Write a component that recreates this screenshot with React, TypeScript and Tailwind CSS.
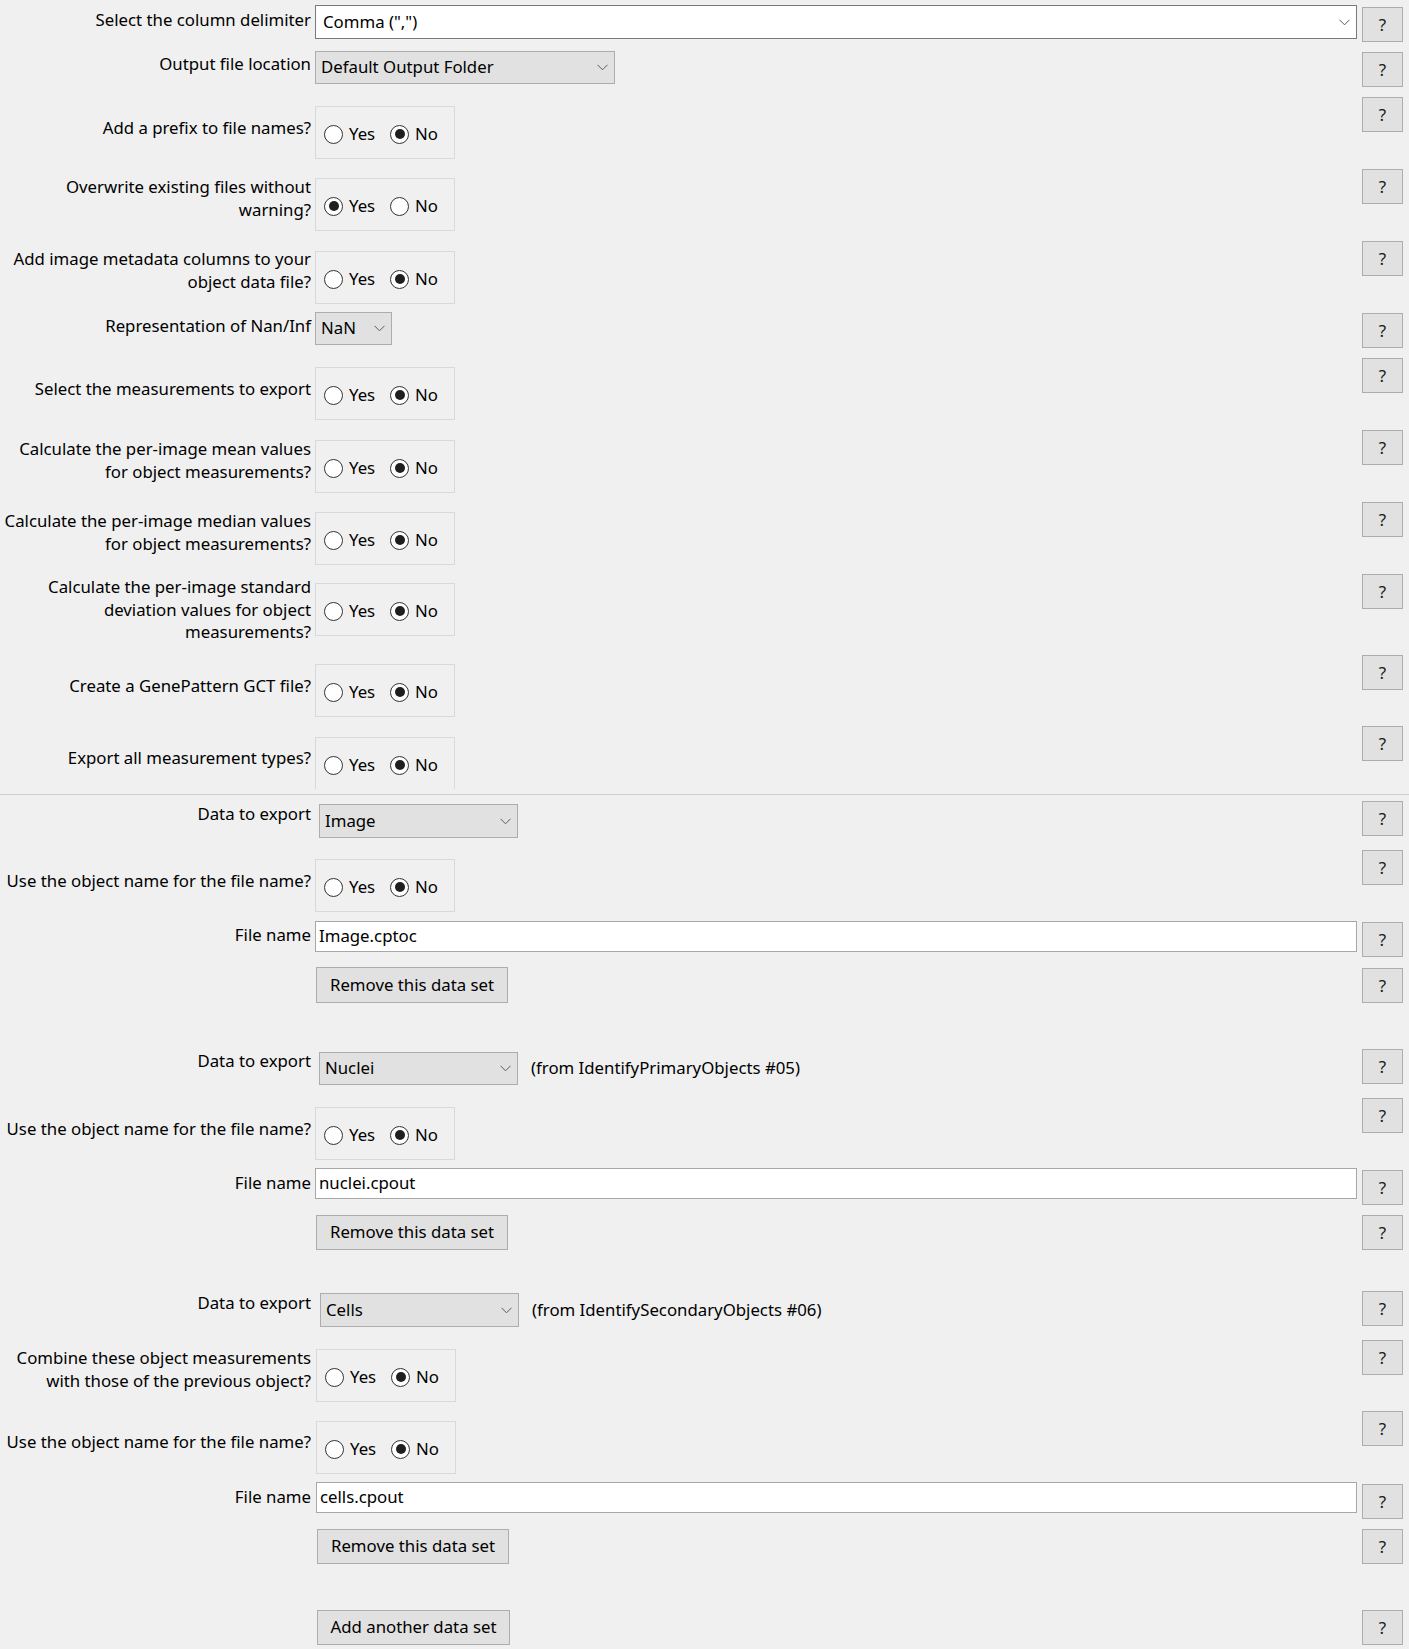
import React from "react";

function Chevron() {
  return (
    <svg width="11" height="7" viewBox="0 0 11 7" className="shrink-0">
      <polyline points="0.5,0.8 5.5,5.8 10.5,0.8" fill="none" stroke="#5a5a5a" strokeWidth="1" />
    </svg>
  );
}

function Help() {
  return (
    <div className="w-[41px] h-[35px] bg-[#e1e1e1] border border-[#adadad] flex items-center justify-center text-[17px] leading-none text-[#1a1a1a]">
      ?
    </div>
  );
}

function Radio({ checked, label, cls }: { checked: boolean; label: string; cls?: string }) {
  return (
    <div className={`flex items-center ${cls ?? ""}`}>
      <div className="w-[19px] h-[19px] rounded-full border border-[#333333] bg-white flex items-center justify-center shrink-0">
        {checked && <div className="w-[10px] h-[10px] rounded-full bg-[#1f1f1f]" />}
      </div>
      <span className="ml-[6px]">{label}</span>
    </div>
  );
}

function YesNo({ yes, cls }: { yes: boolean; cls?: string }) {
  return (
    <div className={`w-[140px] border border-[#d9d9d9] flex items-center pl-[8px] pt-[3px] ${cls ?? "h-[53px]"}`}>
      <Radio checked={yes} label="Yes" cls="w-[66px]" />
      <Radio checked={!yes} label="No" />
    </div>
  );
}

function Choice({ value, cls }: { value: string; cls: string }) {
  return (
    <div className={`bg-[#e1e1e1] border border-[#adadad] flex items-center justify-between pl-[5px] pr-[6px] ${cls}`}>
      <span>{value}</span>
      <Chevron />
    </div>
  );
}

function TextBox({ value }: { value: string }) {
  return (
    <div className="h-[31px] bg-white border border-[#a8a8a8] flex items-center pl-[3px]">
      <span>{value}</span>
    </div>
  );
}

function Btn({ text, cls }: { text: string; cls: string }) {
  return (
    <div className={`h-[35px] bg-[#e1e1e1] border border-[#adadad] flex items-center justify-center ${cls}`}>
      {text}
    </div>
  );
}

function Row({
  rowCls,
  labelCls,
  label,
  ctrlCls,
  children,
  helpCls,
}: {
  rowCls: string;
  labelCls?: string;
  label?: React.ReactNode;
  ctrlCls?: string;
  children?: React.ReactNode;
  helpCls?: string;
}) {
  return (
    <div className={`flex shrink-0 ${rowCls}`}>
      <div className={`w-[311px] shrink-0 text-right whitespace-nowrap ${labelCls ?? ""}`}>{label}</div>
      <div className={`ml-[4px] flex-1 min-w-0 ${ctrlCls ?? ""}`}>{children}</div>
      <div className={`ml-[5px] mr-[6px] w-[41px] shrink-0 ${helpCls ?? ""}`}>
        <Help />
      </div>
    </div>
  );
}

export default function App() {
  return (
    <div className="w-[1409px] h-[1649px] overflow-hidden bg-[#f0f0f0] text-black text-[16.8px] leading-[22.5px] font-['Noto_Sans',sans-serif] flex flex-col">
      {/* 1 */}
      <Row rowCls="h-[51px]" labelCls="pt-[9px]" label="Select the column delimiter" ctrlCls="pt-[5px]" helpCls="pt-[7px]">
        <div className="h-[34px] bg-white border border-[#7a7a7a] flex items-center justify-between pl-[7px] pr-[6px]">
          <span>Comma (",")</span>
          <Chevron />
        </div>
      </Row>
      {/* 2 */}
      <Row rowCls="h-[46px]" labelCls="pt-[2px]" label="Output file location" ctrlCls="pt-0" helpCls="pt-[1px]">
        <Choice value="Default Output Folder" cls="w-[300px] h-[33px]" />
      </Row>
      {/* 3 */}
      <Row rowCls="h-[72px]" labelCls="pt-[20px]" label="Add a prefix to file names?" ctrlCls="pt-[9px]">
        <YesNo yes={false} />
      </Row>
      {/* 4 */}
      <Row
        rowCls="h-[72px]"
        labelCls="pt-[7px]"
        label={<>Overwrite existing files without<br />warning?</>}
        ctrlCls="pt-[9px]"
      >
        <YesNo yes={true} />
      </Row>
      {/* 5 */}
      <Row
        rowCls="h-[71px]"
        labelCls="pt-[7px]"
        label={<>Add image metadata columns to your<br />object data file?</>}
        ctrlCls="pt-[10px]"
      >
        <YesNo yes={false} />
      </Row>
      {/* 6 */}
      <Row rowCls="h-[46px]" labelCls="pt-[3px]" label="Representation of Nan/Inf" ctrlCls="pt-0" helpCls="pt-[1px]">
        <Choice value="NaN" cls="w-[77px] h-[33px]" />
      </Row>
      {/* 7 */}
      <Row rowCls="h-[72px]" labelCls="pt-[20px]" label="Select the measurements to export" ctrlCls="pt-[9px]">
        <YesNo yes={false} />
      </Row>
      {/* 8 */}
      <Row
        rowCls="h-[72px]"
        labelCls="pt-[8px]"
        label={<>Calculate the per-image mean values<br />for object measurements?</>}
        ctrlCls="pt-[10px]"
      >
        <YesNo yes={false} />
      </Row>
      {/* 9 */}
      <Row
        rowCls="h-[72px]"
        labelCls="pt-[8px]"
        label={<>Calculate the per-image median values<br />for object measurements?</>}
        ctrlCls="pt-[10px]"
      >
        <YesNo yes={false} />
      </Row>
      {/* 10 */}
      <Row
        rowCls="h-[81px]"
        labelCls="pt-[2px]"
        label={<>Calculate the per-image standard<br />deviation values for object<br />measurements?</>}
        ctrlCls="pt-[9px]"
      >
        <YesNo yes={false} />
      </Row>
      {/* 11 */}
      <Row rowCls="h-[71px]" labelCls="pt-[20px]" label="Create a GenePattern GCT file?" ctrlCls="pt-[9px]">
        <YesNo yes={false} />
      </Row>
      {/* 12 */}
      <Row rowCls="h-[68px]" labelCls="pt-[21px]" label="Export all measurement types?" ctrlCls="pt-[11px]">
        <YesNo yes={false} cls="h-[52px] border-b-0" />
      </Row>
      <div className="h-[1px] shrink-0 bg-[#cfcfcf]" />
      {/* 13 */}
      <Row rowCls="h-[55px]" labelCls="pt-[8px]" label="Data to export" ctrlCls="pt-[9px] pl-[4px]" helpCls="pt-[6px]">
        <Choice value="Image" cls="w-[199px] h-[34px]" />
      </Row>
      {/* 14 */}
      <Row rowCls="h-[71px]" labelCls="pt-[20px]" label="Use the object name for the file name?" ctrlCls="pt-[9px]">
        <YesNo yes={false} />
      </Row>
      {/* 15 */}
      <Row rowCls="h-[46px]" labelCls="pt-[3px]" label="File name" ctrlCls="pt-0" helpCls="pt-[1px]">
        <TextBox value="Image.cptoc" />
      </Row>
      {/* 16 */}
      <Row rowCls="h-[81px]" ctrlCls="pt-0 pl-[1px]" helpCls="pt-[1px]">
        <Btn text="Remove this data set" cls="w-[192px] h-[36px]" />
      </Row>
      {/* 17 */}
      <Row rowCls="h-[50px]" labelCls="pt-[2px]" label="Data to export" ctrlCls="pt-[4px] pl-[4px]" helpCls="pt-[1px]">
        <div className="flex items-center">
          <Choice value="Nuclei" cls="w-[199px] h-[33px]" />
          <span className="ml-[13px]">(from IdentifyPrimaryObjects #05)</span>
        </div>
      </Row>
      {/* 18 */}
      <Row rowCls="h-[70px]" labelCls="pt-[20px]" label="Use the object name for the file name?" ctrlCls="pt-[9px]">
        <YesNo yes={false} />
      </Row>
      {/* 19 */}
      <Row rowCls="h-[47px]" labelCls="pt-[4px]" label="File name" ctrlCls="pt-0" helpCls="pt-[2px]">
        <TextBox value="nuclei.cpout" />
      </Row>
      {/* 20 */}
      <Row rowCls="h-[75px]" ctrlCls="pt-0 pl-[1px]">
        <Btn text="Remove this data set" cls="w-[192px]" />
      </Row>
      {/* 21 */}
      <Row rowCls="h-[50px]" labelCls="pt-[2px]" label="Data to export" ctrlCls="pt-[3px] pl-[5px]" helpCls="pt-[1px]">
        <div className="flex items-center">
          <Choice value="Cells" cls="w-[199px] h-[34px]" />
          <span className="ml-[13px]">(from IdentifySecondaryObjects #06)</span>
        </div>
      </Row>
      {/* 22 */}
      <Row
        rowCls="h-[71px]"
        labelCls="pt-[7px]"
        label={<>Combine these object measurements<br />with those of the previous object?</>}
        ctrlCls="pt-[9px] pl-[1px]"
      >
        <YesNo yes={false} />
      </Row>
      {/* 23 */}
      <Row rowCls="h-[71px]" labelCls="pt-[20px]" label="Use the object name for the file name?" ctrlCls="pt-[10px] pl-[1px]">
        <YesNo yes={false} />
      </Row>
      {/* 24 */}
      <Row rowCls="h-[47px]" labelCls="pt-[4px]" label="File name" ctrlCls="pt-0 pl-[1px]" helpCls="pt-[2px]">
        <TextBox value="cells.cpout" />
      </Row>
      {/* 25 */}
      <Row rowCls="h-[81px]" ctrlCls="pt-0 pl-[2px]">
        <Btn text="Remove this data set" cls="w-[192px]" />
      </Row>
      {/* 26 */}
      <Row rowCls="h-[39px]" ctrlCls="pt-0 pl-[2px]">
        <Btn text="Add another data set" cls="w-[193px]" />
      </Row>
    </div>
  );
}
